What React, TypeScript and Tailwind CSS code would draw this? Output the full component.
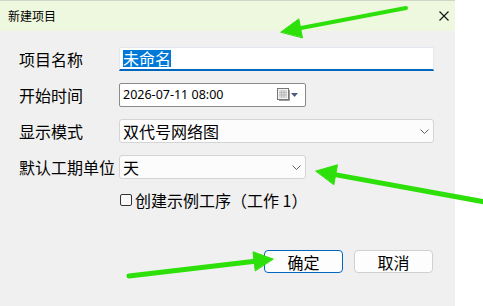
import React from "react";

const cjk = "font-['Noto_Sans_CJK_SC',sans-serif]";

const Chevron = () => (
  <svg width="9" height="5" viewBox="0 0 9 5" className="shrink-0">
    <path d="M0.5 0.5 L4.5 4.5 L8.5 0.5" fill="none" stroke="#5f5f5f" strokeWidth="1" />
  </svg>
);

const CalendarIcon = () => (
  <svg width="22" height="14" viewBox="0 0 22 14" className="shrink-0">
    <rect x="0.5" y="0.5" width="11" height="11" fill="#f4f4f4" stroke="#777" />
    <rect x="2" y="2" width="8" height="8" fill="#dcdcdc" />
    <path d="M2 4.5 H10 M2 7 H10 M4.5 2 V10 M7 2 V10" stroke="#b5b5b5" strokeWidth="0.8" />
    <path d="M2 12.5 H12.5 V2" fill="none" stroke="#9a9a9a" />
    <path d="M14 5 H21 L17.5 9 Z" fill="#4d5c80" />
  </svg>
);

const Arrows = () => (
  <svg
    width="483"
    height="306"
    viewBox="0 0 483 306"
    className="absolute inset-0 pointer-events-none"
  >
    <g fill="#2ee00a" stroke="#2ee00a" strokeLinecap="round">
      <line x1="406" y1="8" x2="301" y2="28" strokeWidth="4" />
      <polygon points="281,32 298.8,18.9 302.4,37.5" strokeWidth="1" />
      <line x1="485" y1="202" x2="335" y2="174.6" strokeWidth="5" />
      <polygon points="316,171 337.5,164.8 333.9,184.4" strokeWidth="1" />
      <line x1="129" y1="276" x2="255" y2="261.2" strokeWidth="5" />
      <polygon points="273,259 253,251.8 255.2,270.6" strokeWidth="1" />
    </g>
  </svg>
);

const Label = ({ children }: { children: React.ReactNode }) => (
  <div className="w-[100px] shrink-0 text-[16px] leading-none text-black whitespace-nowrap">
    {children}
  </div>
);

export default function App() {
  return (
    <div className={`relative w-[483px] h-[306px] flex bg-white overflow-hidden ${cjk}`}>
      <div className="w-[455px] h-full flex flex-col bg-[#f0f0f0]">
        {/* title bar */}
        <div className="h-[31px] shrink-0 flex items-center justify-between pl-[8px] pr-[6px] bg-[#eef8de] border-t border-[#cfd6c6]">
          <span className="text-[12px] text-black">新建项目</span>
          <svg width="10" height="10" viewBox="0 0 10 10" className="mr-[0px]">
            <path d="M0.5 0.5 L9.5 9.5 M9.5 0.5 L0.5 9.5" stroke="#111" strokeWidth="1.1" />
          </svg>
        </div>

        {/* form */}
        <div className="flex flex-col gap-[12px] pt-[16px] pl-[19px]">
          <div className="flex items-center h-[24px]">
            <Label>项目名称</Label>
            <div className="w-[315px] h-[24px] flex items-center pl-[3px] bg-white border border-[#e3e8ee] border-b-2 border-b-[#0067c0]">
              <span className="bg-[#0078d7] text-white text-[16px] leading-[17px]">未命名</span>
            </div>
          </div>

          <div className="flex items-center h-[24px]">
            <Label>开始时间</Label>
            <div className="w-[187px] h-[24px] flex items-center justify-between pl-[3px] pr-[6px] bg-white border border-[#8a8a8a] rounded-[2px]">
              <span className="font-['Noto_Sans',sans-serif] text-[12.5px] text-black">2026-07-11 08:00</span>
              <CalendarIcon />
            </div>
          </div>

          <div className="flex items-center h-[24px]">
            <Label>显示模式</Label>
            <div className="w-[315px] h-[24px] flex items-center justify-between pl-[3px] pr-[4px] bg-[#fcfcfc] border border-[#d4d4d4] rounded-[3px]">
              <span className="text-[16px] leading-none text-black">双代号网络图</span>
              <Chevron />
            </div>
          </div>

          <div className="flex items-center h-[24px]">
            <Label>默认工期单位</Label>
            <div className="w-[187px] h-[24px] flex items-center justify-between pl-[3px] pr-[4px] bg-[#fcfcfc] border border-[#d4d4d4] rounded-[3px]">
              <span className="text-[16px] leading-none text-black">天</span>
              <Chevron />
            </div>
          </div>

          <div className="flex items-center h-[18px] pl-[101px]">
            <label className="flex items-center gap-[3px]">
              <span className="w-[12px] h-[12px] border border-[#333] rounded-[2px] bg-[#f8f8f8]" />
              <span className="text-[16px] leading-none text-black">创建示例工序（工作 1）</span>
            </label>
          </div>
        </div>

        {/* buttons */}
        <div className="flex justify-end gap-[11px] pr-[22px] mt-[41px]">
          <button className="w-[79px] h-[23px] flex items-center justify-center bg-[#fdfdfd] border border-[#0067c0] rounded-[4px] text-[16px] leading-none text-black">
            确定
          </button>
          <button className="w-[79px] h-[23px] flex items-center justify-center bg-[#fdfdfd] border border-[#d0d0d0] rounded-[4px] text-[16px] leading-none text-black">
            取消
          </button>
        </div>
      </div>
      <Arrows />
    </div>
  );
}
